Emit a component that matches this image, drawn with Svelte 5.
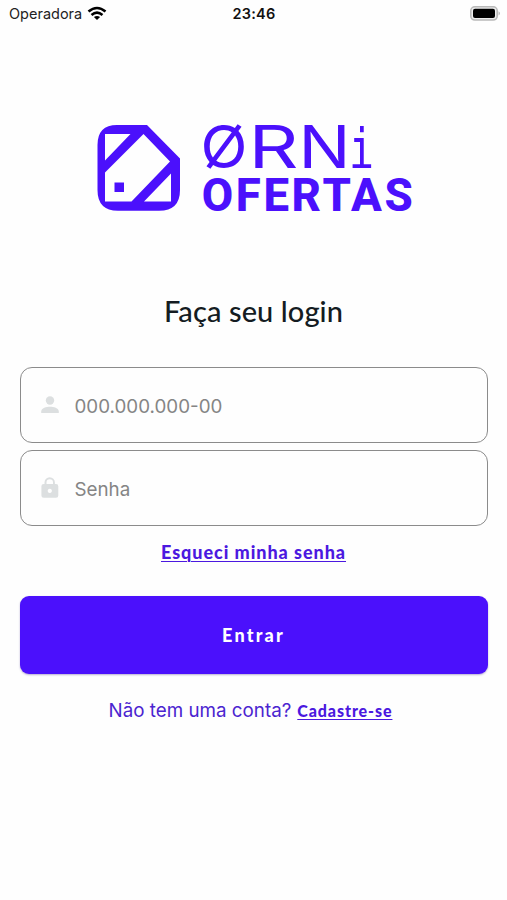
<script>
  let cpf = $state('');
  let password = $state('');
</script>

<main class="screen">
  <header class="status">
    <div class="carrier">
      <span>Operadora</span>
      <svg width="20" height="15" viewBox="0 0 20 15" aria-hidden="true">
        <g fill="none" stroke="#000" stroke-width="2.6">
          <path d="M1.5 5.6Q10 -1.6 18.5 5.6" />
          <path d="M4.5 8.9Q10 4.4 15.5 8.9" />
        </g>
        <path d="M6.9 11Q10 8.8 13.1 11L10 14Z" />
      </svg>
    </div>
    <time>23:46</time>
    <svg class="battery" width="31" height="15" viewBox="0 0 31 15" aria-hidden="true">
      <rect x=".8" y=".8" width="26.4" height="13.2" rx="4" fill="#eee" stroke="#b9b9b9" stroke-width="1.6" />
      <rect x="3" y="2.8" width="22" height="9.2" rx="2" />
      <path d="M28.6 5.3Q31 7.4 28.6 9.5Z" fill="#aaa" />
    </svg>
  </header>

  <svg class="logo" width="316" height="90" viewBox="96 123 316 90" role="img" aria-label="Orni Ofertas">
    <g fill="#4b10fc">
      <path fill-rule="evenodd" d="M117 125H147L180 158.5V190Q180 210.7 159 210.7H118Q97.5 210.7 97.5 190V145Q97.5 125 117 125ZM105 134V160.5L130.5 134ZM143.5 134L105 172.5V201.5H131.5L170 161.5ZM171 173.5L144 201.5H171Z" />
      <rect x="114.5" y="182.5" width="9.5" height="9.5" />
      <g class="orni">
        <text x="200.5" y="167.7" textLength="47" lengthAdjust="spacingAndGlyphs">Ø</text>
        <text x="248.5" y="167.7" textLength="50" lengthAdjust="spacingAndGlyphs">R</text>
        <text x="298.5" y="167.7" textLength="52" lengthAdjust="spacingAndGlyphs">N</text>
        <text class="slab" x="349" y="167.7" textLength="25" lengthAdjust="spacingAndGlyphs">i</text>
      </g>
      <text class="ofertas" x="201.8" y="210.8" textLength="211" lengthAdjust="spacing">OFERTAS</text>
    </g>
  </svg>

  <h1>Faça seu login</h1>

  <form onsubmit={(e) => e.preventDefault()}>
    <label class="field">
      <svg width="24" height="24" viewBox="0 0 24 24" fill="#dcdfe0" aria-hidden="true">
        <circle cx="12" cy="7.5" r="4.2" />
        <path d="M3.2 20V18.4C3.2 15.2 8.4 13.8 12 13.8S20.8 15.2 20.8 18.4V20Z" />
      </svg>
      <input aria-label="CPF" placeholder="000.000.000-00" bind:value={cpf} />
    </label>
    <label class="field second">
      <svg width="24" height="24" viewBox="0 0 24 24" fill="#dcdfe0" aria-hidden="true">
        <path fill-rule="evenodd" d="M6.5 8V6.5a5.2 5.2 0 0 1 10.4 0V8H18a2.3 2.3 0 0 1 2.3 2.3v9.2A2.3 2.3 0 0 1 18 21.8H5.7a2.3 2.3 0 0 1-2.3-2.3v-9.2A2.3 2.3 0 0 1 5.7 8ZM8.5 8h6.5V6.5a3.25 3.25 0 0 0-6.5 0ZM11.8 12.8a2.1 2.1 0 1 0 .01 0Z" />
      </svg>
      <input type="password" aria-label="Senha" placeholder="Senha" bind:value={password} />
    </label>
    <a class="forgot" href="#senha">Esqueci minha senha</a>
    <button type="submit">Entrar</button>
  </form>

  <p class="signup"><span>Não tem uma conta?</span><a href="#cadastro">Cadastre-se</a></p>
</main>

<style>
  :global(body) { background: #fefefe; }
  .screen {
    box-sizing: border-box;
    width: 507px;
    height: 900px;
    overflow: hidden;
    background: #fefefe;
    font-family: Inter, "Liberation Sans", sans-serif;
    display: flex;
    flex-direction: column;
    align-items: center;
  }
  .status {
    box-sizing: border-box;
    width: 100%;
    height: 28px;
    padding: 0 6px 2px 9px;
    display: grid;
    grid-template-columns: 1fr auto 1fr;
    align-items: center;
    font-size: 14.5px;
    color: #222;
  }
  .carrier { display: flex; align-items: center; gap: 5px; }
  time { font-weight: 600; color: #111; letter-spacing: .2px; margin-right: 2px; }
  .battery { justify-self: end; }
  .logo { display: block; margin: 95px 0 0 1px; overflow: visible; }
  .orni text { font: 400 58.7px Inter, sans-serif; }
  .orni .slab { font: 400 56px "DejaVu Sans Mono", monospace; }
  .ofertas { font: 800 45.6px Roboto, sans-serif; }
  h1 {
    margin: 78px 0 0;
    font: 500 29px/40px Lato, sans-serif;
    letter-spacing: .1px;
    color: #141c22;
  }
  form {
    width: 468px;
    margin: 36px 0 0;
    display: flex;
    flex-direction: column;
    align-items: center;
  }
  .field {
    box-sizing: border-box;
    width: 468px;
    height: 76px;
    padding: 0 16px 0 17px;
    border: 1px solid #8b8b8b;
    border-radius: 12px;
    display: flex;
    align-items: center;
    gap: 13px;
  }
  .second { margin-top: 7px; }
  input {
    flex: 1;
    min-width: 0;
    padding: 4px 0 0;
    border: 0;
    outline: 0;
    background: none;
    font: 400 18.8px/24px Inter, sans-serif;
    color: #333;
  }
  input::placeholder { color: #858585; opacity: 1; }
  a {
    color: #4b18e0;
    font-family: Lato, sans-serif;
    font-weight: 900;
    text-decoration: underline;
    text-decoration-thickness: 1px;
    text-underline-offset: 2px;
  }
  .forgot { margin-top: 13px; font-size: 18px; line-height: 26px; letter-spacing: .95px; }
  button {
    width: 468px;
    height: 78px;
    margin-top: 31px;
    border: 0;
    border-radius: 9px;
    background: #4b10fc;
    color: #fff;
    font: 900 18px/24px Lato, sans-serif;
    letter-spacing: 2.2px;
    box-shadow: 0 1px 2px rgba(50, 20, 130, .35);
  }
  .signup {
    margin: 24px 6px 0 0;
    display: flex;
    align-items: baseline;
    gap: 6px;
    font-size: 18.8px;
    line-height: 26px;
    color: #4b24d0;
  }
  .signup a { font-size: 16px; letter-spacing: .9px; }
</style>
